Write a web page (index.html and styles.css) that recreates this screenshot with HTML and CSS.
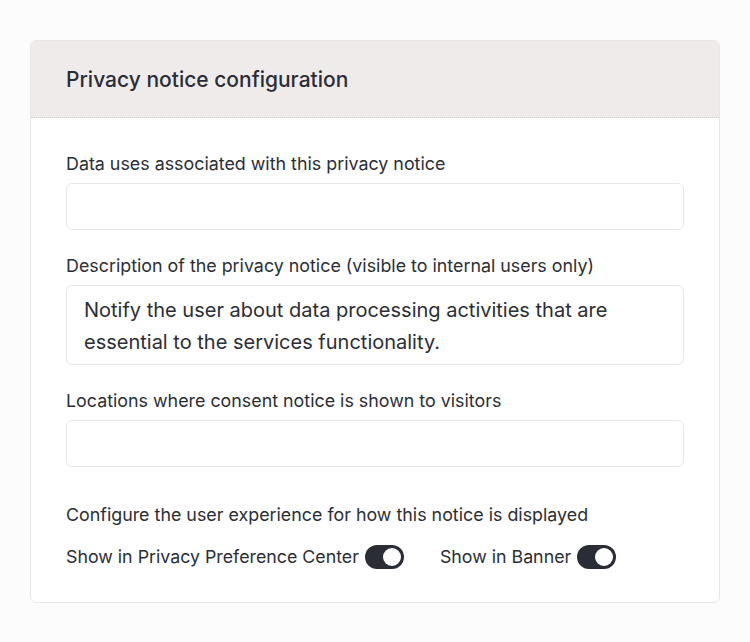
FILE: index.html
```html
<html>
<head>
  <link rel="stylesheet" href="styles.css">
</head>
<body>
  <div class="card">
    <div class="card-header">
      <h2>Privacy notice configuration</h2>
    </div>
    <div class="card-body">
      <div class="field">
        <label>Data uses associated with this privacy notice</label>
        <div class="input"></div>
      </div>
      <div class="field">
        <label>Description of the privacy notice (visible to internal users only)</label>
        <div class="input textarea">Notify the user about data processing activities that are essential to the services functionality.</div>
      </div>
      <div class="field">
        <label>Locations where consent notice is shown to visitors</label>
        <div class="input"></div>
      </div>
      <div class="display">
        <label>Configure the user experience for how this notice is displayed</label>
        <div class="toggles">
          <div class="toggle-item">
            <span>Show in Privacy Preference Center</span>
            <span class="switch"><span class="knob"></span></span>
          </div>
          <div class="toggle-item">
            <span>Show in Banner</span>
            <span class="switch"><span class="knob"></span></span>
          </div>
        </div>
      </div>
    </div>
  </div>
</body>
</html>
```

FILE: styles.css
```css
body {
  margin: 0;
  background-color: #fcfcfc;
  font-family: Inter, "Open Sans", sans-serif;
  color: #2b2e36;
}

.card {
  margin: 40px 30px 0 30px;
  background-color: #ffffff;
  border: 1px solid #ebe6e6;
  border-radius: 6px;
  overflow: hidden;
}

.card-header {
  height: 76px;
  display: flex;
  align-items: center;
  padding: 0 35px;
  background-color: #efebeb;
  border-bottom: 1px dotted #cfcaca;
}

.card-header h2 {
  margin: 0;
  font-size: 21px;
  font-weight: 500;
  color: #2a2d35;
}

.card-body {
  padding: 36px 35px 33px 35px;
  display: flex;
  flex-direction: column;
  gap: 26px;
}

.field {
  display: flex;
  flex-direction: column;
  gap: 9px;
}

label {
  font-size: 17.85px;
  line-height: 20px;
}

.input {
  height: 45px;
  border: 1px solid #ebe6e6;
  border-radius: 6px;
}

.textarea {
  height: auto;
  padding: 8px 17px 6px 17px;
  font-size: 20px;
  line-height: 32px;
}

.display {
  margin-top: 12px;
  display: flex;
  flex-direction: column;
  gap: 20px;
}

.toggles {
  display: flex;
  gap: 36px;
  font-size: 17.8px;
  line-height: 24px;
}

.toggle-item {
  display: flex;
  align-items: center;
  gap: 6px;
}

.switch {
  display: flex;
  justify-content: flex-end;
  align-items: center;
  width: 39px;
  height: 24px;
  padding: 0 3px;
  box-sizing: border-box;
  border-radius: 12px;
  background-color: #2a2d35;
}

.knob {
  width: 18px;
  height: 18px;
  border-radius: 50%;
  background-color: #ffffff;
}
```
